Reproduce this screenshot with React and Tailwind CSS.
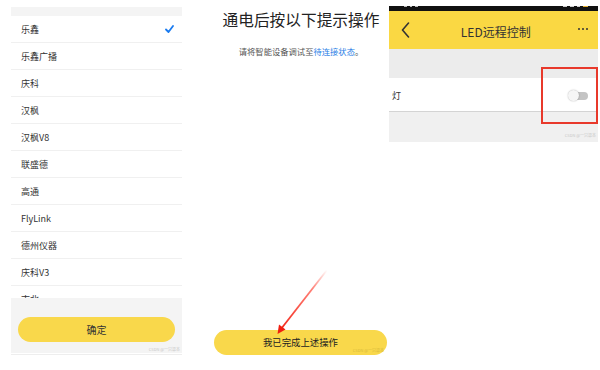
import React from "react";

const font = { fontFamily: '"Noto Sans CJK SC", "Noto Sans", sans-serif' };

const items = ["乐鑫", "乐鑫广播", "庆科", "汉枫", "汉枫V8", "联盛德", "高通", "FlyLink", "德州仪器", "庆科V3", "南北"];

function LeftPanel() {
  return (
    <div className="ml-[11px] w-[171px] h-full flex flex-col pt-[7px]">
      <div className="h-[9px] bg-[#f4f4f4]" />
      <div className="h-[282px] overflow-hidden">
        {items.map((t, i) => (
          <div key={t} className="h-[27px] border-b border-[#f0f0f0] flex items-center justify-between pl-[10px] pr-[8px]">
            <span className="text-[9px] text-[#333] leading-none">{t}</span>
            {i === 0 && (
              <svg width="9" height="8" viewBox="0 0 9 8">
                <path d="M1 4.5 L3.5 7 L8 1" fill="none" stroke="#1a7bf0" strokeWidth="1.8" strokeLinecap="round" strokeLinejoin="round" />
              </svg>
            )}
          </div>
        ))}
      </div>
      <div className="h-[55px] bg-[#f4f4f4] flex flex-col pt-[19px] px-[7px]">
        <div className="h-[25px] rounded-full bg-[#f9d84b] flex items-center justify-center text-[10px] text-[#333]">确定</div>
        <div className="mt-[5px] self-end text-[4px] leading-none text-[#c8c8c8] mr-[-5px]">CSDN @一只逗本</div>
      </div>
      <div className="h-[2px] border-b border-[#eeeeee]" />
    </div>
  );
}

function MiddlePanel() {
  return (
    <div className="relative w-[207px] h-full pl-[31px]">
      <div className="w-[176px] h-full flex flex-col items-center">
        <div className="mt-[10px] text-[15.7px] leading-[20px] text-[#222] whitespace-nowrap">通电后按以下提示操作</div>
        <div className="mt-[16px] text-[8.3px] leading-[10px] text-[#555] whitespace-nowrap">
          请将智能设备调试至<span className="text-[#2a80e6]">待连接状态</span>。
        </div>
        <div className="mt-auto mb-[15px] ml-[-1px] w-[173px] h-[25px] rounded-full bg-[#f9d84b] flex items-center justify-center relative">
          <span className="text-[9.4px] text-[#222]">我已完成上述操作</span>
          <span className="absolute right-[3px] bottom-[3px] text-[4px] leading-none text-[#d8b83a]">CSDN @一只逗本</span>
        </div>
      </div>
      <svg className="absolute left-0 top-0" width="207" height="370" viewBox="182 0 207 370">
        <defs>
          <linearGradient id="ag" x1="327" y1="270" x2="278" y2="333" gradientUnits="userSpaceOnUse">
            <stop offset="0" stopColor="#ff2a1a" stopOpacity="0" />
            <stop offset="0.3" stopColor="#ff2a1a" stopOpacity="0.6" />
            <stop offset="1" stopColor="#f01e10" />
          </linearGradient>
        </defs>
        <line x1="327" y1="270" x2="281" y2="329" stroke="url(#ag)" strokeWidth="1.8" />
        <path d="M277.5 334 L279 324.5 L285.5 329.5 Z" fill="#f01e10" />
      </svg>
    </div>
  );
}

function RightPanel() {
  return (
    <div className="relative w-[209px] h-full flex flex-col">
      <div className="h-[6px]" />
      <div className="h-[5px] bg-[#111] flex items-start gap-[3px] pl-[15px]">
        <div className="w-[3px] h-[1px] bg-[#bbb]" />
        <div className="w-[2px] h-[1px] bg-[#bbb]" />
        <div className="w-[3px] h-[1px] bg-[#bbb]" />
        <div className="ml-auto w-[4px] h-[1px] bg-[#ccc]" />
        <div className="w-[4px] h-[1px] bg-[#ccc]" />
        <div className="w-[3px] h-[1px] bg-[#ccc]" />
        <div className="w-[5px] h-[1px] bg-[#e6b030] mr-[10px]" />
      </div>
      <div className="h-[38px] bg-[#fad843] flex items-center justify-between pl-[12px] pr-[10px]">
        <svg width="9" height="16" viewBox="0 0 9 16">
          <path d="M7.5 1 L1.5 8 L7.5 15" fill="none" stroke="#333" strokeWidth="1.6" strokeLinecap="round" strokeLinejoin="round" />
        </svg>
        <span className="text-[12px] leading-none text-[#333] ml-[4px] mt-[3px]">LED远程控制</span>
        <div className="flex gap-[1.5px] items-center mt-[-2px]">
          <div className="w-[2.5px] h-[2.5px] rounded-full bg-[#333]" />
          <div className="w-[2.5px] h-[2.5px] rounded-full bg-[#333]" />
          <div className="w-[2.5px] h-[2.5px] rounded-full bg-[#333]" />
        </div>
      </div>
      <div className="h-[29px] bg-[#ececec]" />
      <div className="h-[34px] bg-white border-b border-[#d4d4d4] flex items-center justify-between pl-[3px] pr-[10px]">
        <span className="text-[9px] text-[#333] leading-none mt-[2px]">灯</span>
        <div className="relative w-[20px] h-[11px] mt-[2px]">
          <div className="absolute left-[3px] right-0 top-[1.5px] h-[8px] rounded-full bg-[#c4c4c4]" />
          <div className="absolute left-0 top-0 w-[11px] h-[11px] rounded-full bg-[#f6f6f6] shadow-[0_0_1.5px_rgba(0,0,0,0.35)]" />
        </div>
      </div>
      <div className="h-[30px] bg-[#f0f0f0] flex items-end justify-end pr-[2px] pb-[5px]">
        <span className="text-[4px] leading-none text-[#c8c8c8]">CSDN @一只逗本</span>
      </div>
      <div className="absolute left-[152px] top-[67px] w-[57px] h-[57px] border-2 border-solid border-[#e8392b]" />
    </div>
  );
}

export default function App() {
  return (
    <div className="w-[600px] h-[370px] bg-white flex overflow-hidden" style={font}>
      <LeftPanel />
      <MiddlePanel />
      <RightPanel />
    </div>
  );
}
